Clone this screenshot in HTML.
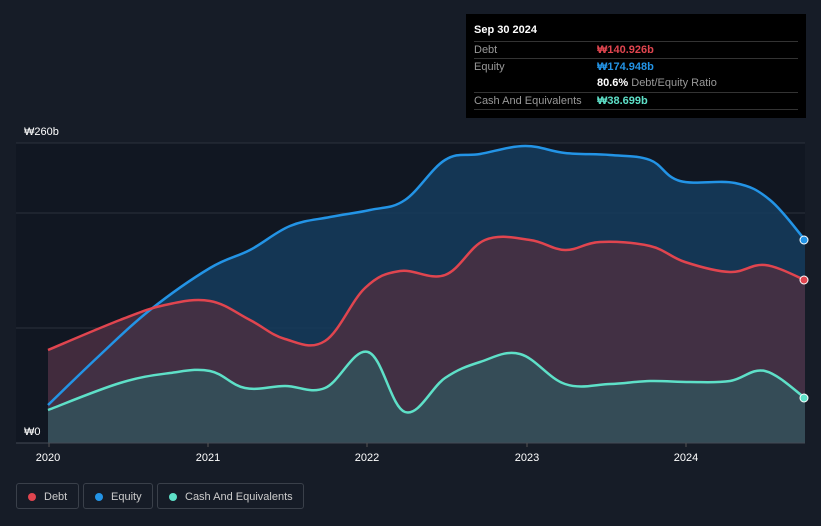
<html><head><style>
body{margin:0;width:821px;height:526px;background:#161c27;font-family:"Liberation Sans",sans-serif;overflow:hidden;position:relative}
.tt{position:absolute;left:466px;top:14px;width:340px;height:104px;background:#000;color:#fff;font-size:11px}
.row{position:absolute;left:8px;width:324px;height:17px;border-top:1px solid #333;line-height:17px;color:#999}
.row span{position:absolute;left:123px;font-weight:bold}
.leg{position:absolute;top:483px;height:26px;border:1px solid #3a404a;border-radius:3px;color:#ccc;font-size:11px;line-height:26px;box-sizing:border-box}
.leg i{position:absolute;left:11px;top:9px;width:8px;height:8px;border-radius:50%}
.leg b{font-weight:normal;position:absolute;left:27px}
</style></head><body>
<svg id="s" width="821" height="526" style="position:absolute;left:0;top:0">
<rect x="16" y="143" width="789" height="300" fill="#111722"/>
<line x1="16" y1="143" x2="805" y2="143" stroke="#2c323c"/>
<line x1="16" y1="213" x2="805" y2="213" stroke="#2c323c"/>
<line x1="16" y1="328" x2="805" y2="328" stroke="#2c323c"/>
<path id="ea" fill="#153a5a" opacity="0.9"/>
<path id="da" fill="#4a2f42" opacity="0.85"/>
<path id="ca" fill="#34505a" opacity="0.9"/>
<path id="el" fill="none" stroke="#2394e6" stroke-width="2.5"/>
<path id="dl" fill="none" stroke="#e0454f" stroke-width="2.5"/>
<path id="cl" fill="none" stroke="#5ee0c8" stroke-width="2.5"/>
<circle cx="804" cy="240" r="4" fill="#2394e6" stroke="#fff" stroke-width="1"/>
<circle cx="804" cy="280" r="4" fill="#e0454f" stroke="#fff" stroke-width="1"/>
<circle cx="804" cy="398" r="4" fill="#5ee0c8" stroke="#fff" stroke-width="1"/>
<line x1="16" y1="443" x2="805" y2="443" stroke="#444a54"/>
<g stroke="#555" ><line x1="49" y1="443" x2="49" y2="447"/><line x1="208" y1="443" x2="208" y2="447"/><line x1="367" y1="443" x2="367" y2="447"/><line x1="527" y1="443" x2="527" y2="447"/><line x1="686" y1="443" x2="686" y2="447"/></g>
<g fill="#fff" font-size="11" font-family="Liberation Sans" text-anchor="middle"><text x="48" y="461">2020</text><text x="208" y="461">2021</text><text x="367" y="461">2022</text><text x="527" y="461">2023</text><text x="686" y="461">2024</text></g>
<text x="24" y="135" fill="#fff" font-size="11" font-family="Liberation Sans">₩260b</text>
<text x="24" y="435" fill="#fff" font-size="11" font-family="Liberation Sans">₩0</text>
</svg>
<script>
function sm(p){var d="M"+p[0][0]+","+p[0][1];for(var i=0;i<p.length-1;i++){var a=p[i-1]||p[i],b=p[i],c=p[i+1],e=p[i+2]||c;var t=0.18;d+=" C"+(b[0]+(c[0]-a[0])*t)+","+(b[1]+(c[1]-a[1])*t)+" "+(c[0]-(e[0]-b[0])*t)+","+(c[1]-(e[1]-b[1])*t)+" "+c[0]+","+c[1];}return d;}
var E=[[48,405],[100,355],[150,310],[210,268],[250,250],[290,226],[330,217],[370,210],[405,200],[445,160],[480,154],[525,146],[565,153],[610,155],[650,160],[680,181],[735,183],[770,200],[805,240]];
var D=[[48,350],[120,320],[165,305],[210,301],[250,320],[285,339],[325,341],[365,288],[400,271],[445,275],[485,240],[530,240],[565,250],[600,242],[650,246],[685,262],[730,272],[765,265],[805,280]];
var C=[[48,410],[120,383],[170,373],[210,371],[245,388],[285,386],[325,388],[368,352],[405,412],[445,378],[480,362],[520,354],[565,384],[610,384],[650,381],[690,382],[730,381],[765,371],[805,398]];
[["e",E],["d",D],["c",C]].forEach(function(x){var s=sm(x[1]);document.getElementById(x[0]+"l").setAttribute("d",s);document.getElementById(x[0]+"a").setAttribute("d",s+" L805,443 L48,443 Z");});
</script>
<div class="tt">
<div style="position:absolute;left:8px;top:10px;font-weight:bold;font-size:11px">Sep 30 2024</div>
<div class="row" style="top:27px">Debt<span style="color:#e0454f">₩140.926b</span></div>
<div class="row" style="top:44px">Equity<span style="color:#2394e6">₩174.948b</span></div>
<div class="row" style="top:61px;border-top:none"><span style="color:#fff">80.6% <b style="color:#999;font-weight:normal">Debt/Equity Ratio</b></span></div>
<div class="row" style="top:78px">Cash And Equivalents<span style="color:#5ee0c8">₩38.699b</span></div>
<div class="row" style="top:95px;height:0"></div>
</div>
<div class="leg" style="left:16px;width:63px"><i style="background:#e0454f"></i><b>Debt</b></div>
<div class="leg" style="left:83px;width:70px"><i style="background:#2394e6"></i><b>Equity</b></div>
<div class="leg" style="left:157px;width:147px"><i style="background:#5ee0c8"></i><b>Cash And Equivalents</b></div>
</body></html>
